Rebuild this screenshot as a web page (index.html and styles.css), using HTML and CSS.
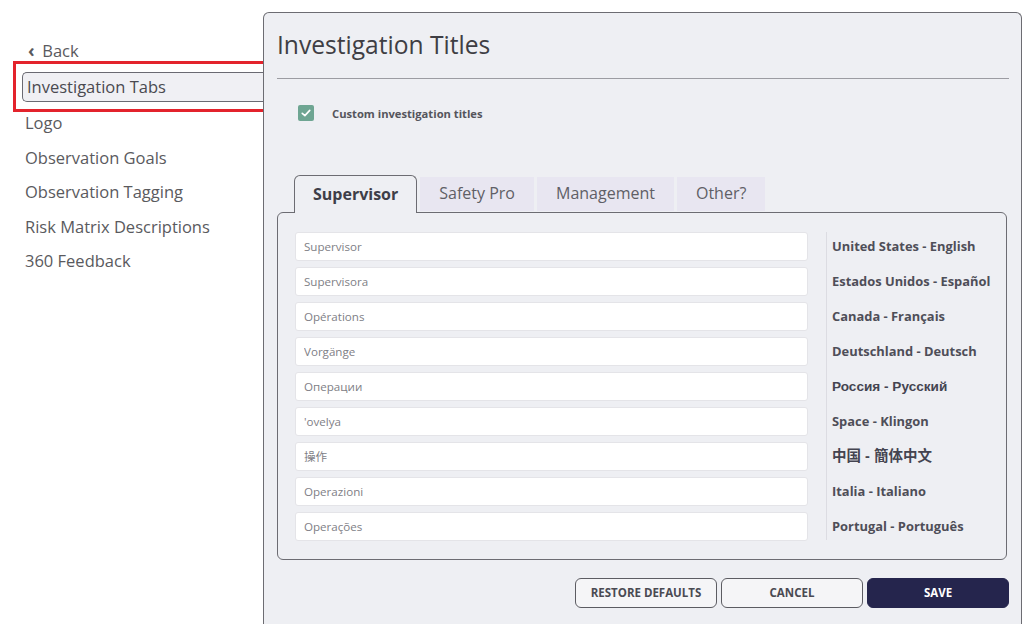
FILE: index.html
```html
<!DOCTYPE html>
<html lang="en">
<head>
  <meta charset="UTF-8" />
  <meta name="viewport" content="width=device-width, initial-scale=1.0" />
  <title>Investigation Titles</title>
  <link rel="stylesheet" href="styles.css">
</head>
<body>
  <div class="page">
    <!-- Settings navigation -->
    <nav class="sidebar">
      <a class="back-link" href="#"><span class="chev">&#8249;</span> Back</a>
      <div class="highlight">
        <a class="nav-item active" href="#">Investigation Tabs</a>
      </div>
      <a class="nav-item" href="#">Logo</a>
      <a class="nav-item" href="#">Observation Goals</a>
      <a class="nav-item" href="#">Observation Tagging</a>
      <a class="nav-item" href="#">Risk Matrix Descriptions</a>
      <a class="nav-item" href="#">360 Feedback</a>
    </nav>

    <!-- Main panel -->
    <main class="panel">
      <h1 class="panel-title">Investigation Titles</h1>
      <hr class="divider">

      <label class="check-row">
        <span class="checkbox">
          <svg viewBox="0 0 16 16" width="12" height="12"><path d="M3 8.5 L6.5 11.5 L13 4.5" fill="none" stroke="#fff" stroke-width="2.2" stroke-linecap="round" stroke-linejoin="round"/></svg>
        </span>
        Custom investigation titles
      </label>

      <div class="tabs">
        <div class="tab active">Supervisor</div>
        <div class="tab">Safety Pro</div>
        <div class="tab">Management</div>
        <div class="tab">Other?</div>
      </div>

      <div class="tab-body">
        <div class="inputs">
          <input class="title-input" type="text" value="Supervisor">
          <input class="title-input" type="text" value="Supervisora">
          <input class="title-input" type="text" value="Opérations">
          <input class="title-input" type="text" value="Vorgänge">
          <input class="title-input" type="text" value="Операции">
          <input class="title-input" type="text" value="'ovelya">
          <input class="title-input" type="text" value="操作">
          <input class="title-input" type="text" value="Operazioni">
          <input class="title-input" type="text" value="Operações">
        </div>
        <div class="locales">
          <div class="locale">United States - English</div>
          <div class="locale">Estados Unidos - Español</div>
          <div class="locale">Canada - Français</div>
          <div class="locale">Deutschland - Deutsch</div>
          <div class="locale" lang="ru">Россия - Русский</div>
          <div class="locale">Space - Klingon</div>
          <div class="locale" lang="zh">中国 - 簡体中文</div>
          <div class="locale">Italia - Italiano</div>
          <div class="locale">Portugal - Português</div>
        </div>
      </div>

      <div class="actions">
        <button class="btn btn-outline">RESTORE DEFAULTS</button>
        <button class="btn btn-outline">CANCEL</button>
        <button class="btn btn-primary">SAVE</button>
      </div>
    </main>
  </div>
</body>
</html>
```

FILE: styles.css
```css
/* Reset */
* {
  margin: 0;
  padding: 0;
  box-sizing: border-box;
}
body {
  font-family: 'Open Sans', 'Noto Sans CJK JP', sans-serif;
  background: #fff;
  color: #555;
  overflow: hidden;
  height: 624px;
}
.page {
  display: flex;
  align-items: flex-start;
}

/* Sidebar */
.sidebar {
  width: 263px;
  flex-shrink: 0;
  display: flex;
  flex-direction: column;
  padding-top: 40px;
}
.sidebar a {
  text-decoration: none;
  color: #5a5a5e;
  font-size: 16.5px;
}
.back-link {
  padding-left: 28px;
  line-height: 22px;
  margin-bottom: -1px;
}
.chev {
  font-weight: 700;
  font-size: 18px;
  display: inline-block;
  width: 10px;
  line-height: 18px;
}
.highlight {
  border: 3px solid #e3232c;
  border-right: none;
  margin-left: 13px;
  padding: 8px 0 7px 6px;
}
.nav-item {
  padding-left: 25px;
  line-height: 22px;
  margin-bottom: 12.5px;
}
.nav-item.active {
  display: block;
  padding-left: 4px;
  margin-bottom: 0;
  line-height: 28px;
  background: #f0f0f4;
  border: 1.5px solid #6a6a72;
  border-right: none;
  border-radius: 5px 0 0 5px;
  color: #4a4a50;
}

/* Main panel */
.panel {
  flex: 1;
  margin-top: 12px;
  margin-right: 10px;
  height: 640px;
  background: #eeeff3;
  border: 1.5px solid #6c6c72;
  border-bottom: none;
  border-radius: 6px 6px 0 0;
  padding: 0 12px 0 13px;
}
.panel-title {
  font-weight: 400;
  font-size: 24.6px;
  color: #3e3e44;
  line-height: 32px;
  margin-top: 16px;
}
.divider {
  border: none;
  border-top: 1.5px solid #9c9ca2;
  margin-top: 17px;
}
.check-row {
  display: flex;
  align-items: center;
  gap: 18px;
  margin-top: 26px;
  padding-left: 21px;
  font-size: 11.2px;
  font-weight: 700;
  color: #55555c;
}
.checkbox {
  width: 16px;
  height: 16px;
  background: #6ea592;
  border-radius: 2px;
  display: flex;
  align-items: center;
  justify-content: center;
}

/* Tabs */
.tabs {
  display: flex;
  gap: 3px;
  margin-top: 54px;
  padding-left: 17px;
  position: relative;
  z-index: 1;
}
.tab {
  height: 34px;
  padding: 0 19px 3px;
  display: flex;
  align-items: center;
  font-size: 16px;
  color: #5f5f66;
  background: #e8e6f1;
  margin-top: 2px;
}
.tab.active {
  height: 38px;
  margin-top: 0;
  margin-bottom: -1.5px;
  background: #eeeff3;
  border: 1.5px solid #6c6c72;
  border-bottom: none;
  border-radius: 6px 6px 0 0;
  font-weight: 700;
  color: #3e3e48;
  padding: 0 18px 2px;
}
.tab-body {
  display: flex;
  margin-right: 2px;
  border: 1.5px solid #6c6c72;
  border-radius: 6px;
  padding: 19px 0 18px 17px;
  height: 348px;
}
.inputs {
  width: 513px;
  display: flex;
  flex-direction: column;
  gap: 6px;
}
.title-input {
  height: 29px;
  border: 1px solid #e4e4e8;
  border-radius: 3px;
  background: #fff;
  padding: 0 8px;
  font-family: 'Open Sans', 'Noto Sans CJK SC', sans-serif;
  font-size: 11.6px;
  color: #808086;
  outline: none;
}
.locales {
  margin-left: 18px;
  border-left: 1.5px solid #dcdce2;
  padding-left: 5px;
  display: flex;
  flex-direction: column;
  gap: 6px;
  height: 308px;
}
.locale {
  height: 29px;
  line-height: 29px;
  font-size: 12.9px;
  font-weight: 700;
  color: #4e4e58;
  white-space: nowrap;
}
.locale:lang(ru) {
  font-family: 'Liberation Sans', sans-serif;
  font-size: 13.6px;
  color: #444450;
}
.locale:lang(zh) {
  font-family: 'Liberation Sans', 'Noto Sans CJK JP', sans-serif;
  font-size: 14.5px;
  color: #444450;
}

/* Footer buttons */
.actions {
  display: flex;
  justify-content: flex-end;
  gap: 4px;
  margin-top: 18px;
}
.btn {
  width: 142px;
  height: 30px;
  border-radius: 6px;
  font-family: 'Open Sans', sans-serif;
  font-size: 11.5px;
  font-weight: 700;
  cursor: pointer;
}
.btn-outline {
  background: #f5f5f7;
  border: 1.5px solid #5c5c62;
  color: #4a4a52;
}
.btn-primary {
  background: #25254d;
  border: 1.5px solid #25254d;
  color: #fff;
}
```
